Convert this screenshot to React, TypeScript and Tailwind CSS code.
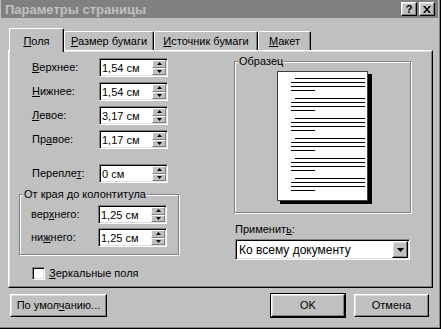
import React from "react";

const raised =
  "border border-t-white border-l-white border-r-black border-b-black shadow-[inset_-1px_-1px_0_#808080,inset_1px_1px_0_#dfdfdf]";
const sunken =
  "border border-t-[#808080] border-l-[#808080] border-r-white border-b-white shadow-[inset_1px_1px_0_#000,inset_-1px_-1px_0_#dfdfdf]";

function Tri({ down }: { down?: boolean }) {
  return (
    <svg width="5" height="3" viewBox="0 0 5 3" className="block">
      {down ? <polygon points="0,0 5,0 2.5,3" fill="#000" /> : <polygon points="2.5,0 5,3 0,3" fill="#000" />}
    </svg>
  );
}

function Spin({ value }: { value: string }) {
  return (
    <div className={`w-[69px] h-[19px] flex ${sunken} bg-white`}>
      <div className="flex-1 pl-[2px] pt-[1px] flex items-center leading-none text-[11px]">{value}</div>
      <div className="w-[15px] flex flex-col py-[1px] pr-[1px]">
        <div className="flex-1 bg-[#c0c0c0] border-t border-l border-t-white border-l-white border-r border-b border-r-[#808080] border-b-[#808080] flex items-center justify-center">
          <Tri />
        </div>
        <div className="flex-1 bg-[#c0c0c0] border-t border-l border-t-white border-l-white border-r border-b border-r-[#808080] border-b-[#808080] flex items-center justify-center">
          <Tri down />
        </div>
      </div>
    </div>
  );
}

function Row({ label, value, className = "" }: { label: React.ReactNode; value: string; className?: string }) {
  return (
    <div className={`flex items-center h-[19px] ${className}`}>
      <div className="w-[67px] leading-none">{label}</div>
      <Spin value={value} />
    </div>
  );
}

function Page() {
  const groups = [0, 1, 2, 3, 4, 5];
  return (
    <svg width="95" height="133" viewBox="0 0 95 133" className="block">
      <rect x="3" y="3" width="92" height="130" fill="#000" />
      <rect x="0.5" y="0.5" width="90" height="129" fill="#fff" stroke="#404040" strokeWidth="1" />
      {groups.map((g) => {
        const y = 7.5 + g * 20;
        return (
          <g key={g} stroke="#000" strokeWidth="1">
            <line x1="18" y1={y} x2="88" y2={y} />
            <line x1="14" y1={y + 4} x2="88" y2={y + 4} />
            <line x1="14" y1={y + 8} x2="88" y2={y + 8} />
            <line x1="14" y1={y + 12} x2="38" y2={y + 12} />
          </g>
        );
      })}
    </svg>
  );
}

export default function App() {
  return (
    <div className="w-[441px] h-[329px] bg-[#c0c0c0] overflow-hidden font-['Liberation_Sans',Arial,sans-serif] text-[11px] text-black">
      <div className="w-[441px] h-[329px] flex flex-col border-r border-b border-r-black border-b-black">
        <div className="w-[440px] h-[328px] flex flex-col border-r border-b border-r-[#808080] border-b-[#808080]">
          {/* Title bar */}
          <div className="h-[18px] w-[437px] ml-[1px] bg-[#808080] flex items-center pl-[4px] pr-[3px]">
            <div className="flex-1 font-bold text-[13px] text-[#c0c0c0] leading-none">
              Параметры страницы
            </div>
            <div className={`w-[16px] h-[14px] bg-[#c0c0c0] ${raised} flex items-center justify-center font-bold text-[11px] leading-none`}>
              ?
            </div>
            <div className={`w-[16px] h-[14px] ml-[2px] bg-[#c0c0c0] ${raised} flex items-center justify-center`}>
              <svg width="8" height="7" viewBox="0 0 8 7">
                <path d="M0 0h2l2 2.5L6 0h2L5 3.5 8 7H6L4 4.5 2 7H0l3-3.5z" fill="#000" />
              </svg>
            </div>
          </div>

          {/* Tabs */}
          <div className="mt-[10px] h-[22px] ml-[9px] flex items-end">
            <div className="relative z-10 -mb-[2px] w-[55px] h-[24px] bg-[#c0c0c0] border-t border-l border-r border-t-white border-l-white border-r-black rounded-t-[2px] shadow-[inset_-1px_0_0_#808080] flex justify-center pt-[7px] leading-none">
              <span>
                <u>П</u>оля
              </span>
            </div>
            <div className="w-[90px] h-[19px] border-t border-l border-r border-t-white border-l-white border-r-black rounded-t-[2px] shadow-[inset_-1px_0_0_#808080] flex justify-center pt-[4px] leading-none">
              <span>
                <u>Р</u>азмер бумаги
              </span>
            </div>
            <div className="w-[104px] h-[19px] border-t border-l border-r border-t-white border-l-white border-r-black rounded-t-[2px] shadow-[inset_-1px_0_0_#808080] flex justify-center pt-[4px] leading-none">
              <span>
                <u>И</u>сточник бумаги
              </span>
            </div>
            <div className="w-[53px] h-[19px] border-t border-l border-r border-t-white border-l-white border-r-black rounded-t-[2px] shadow-[inset_-1px_0_0_#808080] flex justify-center pt-[4px] leading-none">
              <span>
                <u>М</u>акет
              </span>
            </div>
          </div>

          {/* Panel */}
          <div className={`ml-[8px] w-[425px] h-[238px] ${raised} flex`}>
            {/* Left column */}
            <div className="w-[225px] flex flex-col pt-[7px]">
              <Row className="ml-[23px]" label={<span><u>В</u>ерхнее:</span>} value="1,54 см" />
              <Row className="ml-[23px] mt-[5px]" label={<span><u>Н</u>ижнее:</span>} value="1,54 см" />
              <Row className="ml-[23px] mt-[5px]" label={<span><u>Л</u>евое:</span>} value="3,17 см" />
              <Row className="ml-[23px] mt-[5px]" label={<span>Пр<u>а</u>вое:</span>} value="1,17 см" />
              <Row className="ml-[23px] mt-[15px]" label={<span>Перепле<u>т</u>:</span>} value="0 см" />

              <fieldset className="ml-[10px] mt-[5px] w-[160px] border border-[#808080] shadow-[inset_1px_1px_0_#fff,1px_1px_0_#fff] pb-[7px]">
                <legend className="ml-[3px] px-[1px] bg-[#c0c0c0] leading-[13px]">От края до колонтитула</legend>
                <Row className="ml-[11px] mt-[4px]" label={<span>вер<u>х</u>него:</span>} value="1,25 см" />
                <Row className="ml-[11px] mt-[4px]" label={<span>ни<u>ж</u>него:</span>} value="1,25 см" />
              </fieldset>

              <div className="ml-[23px] mt-[12px] flex items-center">
                <div className={`w-[13px] h-[13px] bg-white ${sunken}`} />
                <span className="ml-[4px] leading-none">
                  <u>З</u>еркальные поля
                </span>
              </div>
            </div>

            {/* Right column */}
            <div className="flex flex-col pt-[4px]">
              <fieldset className="w-[177px] h-[158px] border border-[#808080] shadow-[inset_1px_1px_0_#fff,1px_1px_0_#fff]">
                <legend className="ml-[3px] px-[1px] bg-[#c0c0c0] leading-[13px]">Образец</legend>
                <div className="ml-[42px] mt-[3px]">
                  <Page />
                </div>
              </fieldset>
              <div className="mt-[10px] ml-[1px] leading-[13px]">
                Применит<u>ь</u>:
              </div>
              <div className={`mt-[3px] ml-[1px] w-[175px] h-[21px] bg-white ${sunken} flex items-center`}>
                <div className="flex-1 pl-[3px] leading-none text-[12px]">Ко всему документу</div>
                <div className={`w-[16px] h-[17px] mr-[1px] bg-[#c0c0c0] ${raised} flex items-center justify-center`}>
                  <svg width="7" height="4" viewBox="0 0 7 4">
                    <polygon points="0,0 7,0 3.5,4" fill="#000" />
                  </svg>
                </div>
              </div>
            </div>
          </div>

          {/* Buttons */}
          <div className="mt-[5px] flex items-center h-[25px]">
            <div className={`ml-[10px] w-[97px] h-[23px] ${raised} flex items-center justify-center leading-none`}>
              <span>
                По умол<u>ч</u>анию...
              </span>
            </div>
            <div className="ml-auto w-[76px] h-[25px] border border-black">
              <div className={`w-full h-full ${raised} flex items-center justify-center leading-none`}>OK</div>
            </div>
            <div className={`ml-[8px] mr-[10px] w-[75px] h-[23px] ${raised} flex items-center justify-center leading-none`}>
              Отмена
            </div>
          </div>
        </div>
      </div>
    </div>
  );
}
